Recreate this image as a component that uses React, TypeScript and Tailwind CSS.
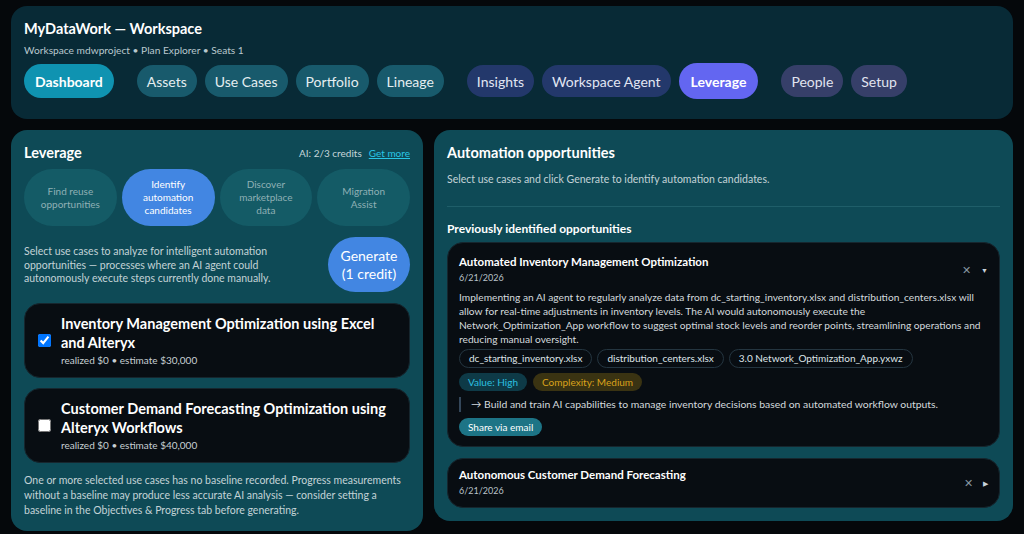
import React, { useState } from 'react';

const navGroups = [
  [{ label: 'Dashboard', tone: 'dash' }],
  [
    { label: 'Assets', tone: 'teal' },
    { label: 'Use Cases', tone: 'teal' },
    { label: 'Portfolio', tone: 'teal' },
    { label: 'Lineage', tone: 'teal' },
  ],
  [
    { label: 'Insights', tone: 'blue' },
    { label: 'Workspace Agent', tone: 'blue' },
    { label: 'Leverage', tone: 'active' },
  ],
  [
    { label: 'People', tone: 'slate' },
    { label: 'Setup', tone: 'slate' },
  ],
];

const toneClass: Record<string, string> = {
  dash: 'bg-[#0f93b1] text-white font-bold h-[34px] px-[11px]',
  teal: 'bg-[#185a6c] text-[#e4eef1] h-[32px] px-[10px]',
  blue: 'bg-[#23386b] text-[#e1e6f3] h-[32px] px-[10px]',
  active: 'bg-[#6366f1] text-white font-bold h-[36px] px-3',
  slate: 'bg-[#363f69] text-[#e1e4f0] h-[32px] px-[10px]',
};

const tabs = [
  'Find reuse opportunities',
  'Identify automation candidates',
  'Discover marketplace data',
  'Migration Assist',
];

const useCases = [
  { title: 'Inventory Management Optimization using Excel and Alteryx', est: '$30,000', checked: true },
  { title: 'Customer Demand Forecasting Optimization using Alteryx Workflows', est: '$40,000', checked: false },
];

const chips = ['dc_starting_inventory.xlsx', 'distribution_centers.xlsx', '3.0 Network_Optimization_App.yxwz'];

export default function App() {
  const [checked, setChecked] = useState(useCases.map((u) => u.checked));

  return (
    <div className="min-h-screen bg-[#05080b] px-[11px] pt-[6px] pb-[11px] font-['Lato',sans-serif] text-white">
      <header className="rounded-2xl bg-[#082a36] px-[13px] pt-[13px] pb-[20px]">
        <h1 className="text-[14.5px] font-bold leading-[20px]">MyDataWork — Workspace</h1>
        <p className="mt-[3px] text-[10.2px] leading-[16px] text-[#b8c8ce]">
          Workspace mdwproject • Plan Explorer • Seats 1
        </p>
        <nav className="mt-[5px] flex h-[36px] items-center gap-[23px]">
          {navGroups.map((group, gi) => (
            <div key={gi} className="flex items-center gap-2">
              {group.map((item) => (
                <button
                  key={item.label}
                  className={`flex items-center rounded-full text-[14px] ${toneClass[item.tone]}`}
                >
                  {item.label}
                </button>
              ))}
            </div>
          ))}
        </nav>
      </header>

      <main className="mt-[11px] grid grid-cols-[412px_1fr] items-start gap-[11px]">
        {/* left: leverage tools */}
        <section className="rounded-2xl bg-[#0e4a56] px-[13px] pt-[14px] pb-[13px]">
          <div className="flex items-center justify-between">
            <h2 className="text-[14.5px] font-bold leading-[18px]">Leverage</h2>
            <div className="flex items-center gap-[7px] text-[10px] text-[#c6d6da]">
              <span>AI: 2/3 credits</span>
              <a href="#" className="text-[#29c6e6] underline">Get more</a>
            </div>
          </div>

          <div className="mt-[7px] grid grid-cols-4 gap-[5px]">
            {tabs.map((t, i) => (
              <button
                key={t}
                className={`flex h-[57px] items-center justify-center rounded-full px-4 text-center text-[10px] leading-[13px] ${
                  i === 1 ? 'bg-[#4286e2] text-white' : 'bg-[#145b66] text-[#8fb0b5]'
                }`}
              >
                {t}
              </button>
            ))}
          </div>

          <div className="mt-[11px] flex items-start justify-between">
            <p className="mt-[8px] w-[250px] text-[10.5px] leading-[13.5px] text-[#c3d3d7]">
              Select use cases to analyze for intelligent automation opportunities — processes where an AI agent could
              autonomously execute steps currently done manually.
            </p>
            <button className="h-[55px] w-[82px] rounded-full bg-[#4286e2] text-[14px] leading-[18px] text-white">
              Generate
              <br />
              (1 credit)
            </button>
          </div>

          <div className="mt-[11px] flex flex-col gap-[10px]">
            {useCases.map((u, i) => (
              <label
                key={u.title}
                className="flex h-[75px] items-center gap-[10px] rounded-2xl border border-[#16262e] bg-[#080d12] pl-[13px] pr-3"
              >
                <input
                  type="checkbox"
                  checked={checked[i]}
                  onChange={() => setChecked((c) => c.map((v, j) => (j === i ? !v : v)))}
                  className="h-[13px] w-[13px] shrink-0"
                />
                <div>
                  <div className="text-[14.5px] font-bold leading-[19px]">{u.title}</div>
                  <div className="mt-[1px] text-[10px] leading-[15px] text-[#c7cfd3]">realized $0 • estimate {u.est}</div>
                </div>
              </label>
            ))}
          </div>

          <p className="mt-[10px] text-[10.5px] leading-[15px] text-[#c3d3d7]">
            One or more selected use cases has no baseline recorded. Progress measurements without a baseline may produce
            less accurate AI analysis — consider setting a baseline in the Objectives &amp; Progress tab before generating.
          </p>
        </section>

        {/* right: automation results */}
        <section className="rounded-2xl bg-[#0e4a56] px-[13px] pt-[14px] pb-[13px]">
          <h2 className="text-[14.5px] font-bold leading-[18px]">Automation opportunities</h2>
          <p className="mt-[10px] text-[10.5px] leading-[14px] text-[#c3d3d7]">
            Select use cases and click Generate to identify automation candidates.
          </p>
          <div className="mt-[20px] h-px bg-[#1f5e69]" />
          <h3 className="mt-[14px] text-[12px] font-bold leading-[16px]">Previously identified opportunities</h3>

          <div className="mt-[5px] flex flex-col gap-[11px]">
            <div className="rounded-2xl border border-[#16262e] bg-[#080d12] px-[11px] pt-[11px] pb-[10px]">
              <div className="flex items-center justify-between">
                <div>
                  <div className="text-[11.5px] font-bold leading-[16px]">Automated Inventory Management Optimization</div>
                  <div className="text-[9px] leading-[16px] text-[#b8c2c8]">6/21/2026</div>
                </div>
                <div className="flex items-center gap-[10px] text-[#8796a0]">
                  <span className="text-[11px]">✕</span>
                  <span className="text-[7px] text-[#c8d2da]">▼</span>
                </div>
              </div>
              <p className="mt-[4px] text-[10.2px] leading-[14px] text-[#d4dade]">
                Implementing an AI agent to regularly analyze data from dc_starting_inventory.xlsx and distribution_centers.xlsx
                will allow for real-time adjustments in inventory levels. The AI would autonomously execute the
                Network_Optimization_App workflow to suggest optimal stock levels and reorder points, streamlining operations
                and reducing manual oversight.
              </p>
              <div className="mt-[3px] flex gap-[5px]">
                {chips.map((c) => (
                  <span
                    key={c}
                    className="flex h-[19px] items-center rounded-full border border-[#243540] px-[9px] text-[10px] text-[#dfe5e9]"
                  >
                    {c}
                  </span>
                ))}
              </div>
              <div className="mt-[5px] flex gap-[6px]">
                <span className="flex h-[18px] items-center rounded-full bg-[#0e3a47] px-[9px] text-[10px] text-[#2cc0e0]">
                  Value: High
                </span>
                <span className="flex h-[18px] items-center rounded-full bg-[#3a3312] px-[9px] text-[10px] text-[#d9a21c]">
                  Complexity: Medium
                </span>
              </div>
              <div className="mt-[6px] border-l-2 border-[#34475a] pl-[10px] text-[10.4px] leading-[15px] text-[#d4dade]">
                → Build and train AI capabilities to manage inventory decisions based on automated workflow outputs.
              </div>
              <button className="mt-[6px] flex h-[18px] items-center rounded-full bg-[#1d7486] px-[9px] text-[10px] text-white">
                Share via email
              </button>
            </div>

            <div className="flex items-center justify-between rounded-2xl border border-[#16262e] bg-[#080d12] px-[11px] py-[8px]">
              <div>
                <div className="text-[11.5px] font-bold leading-[16px]">Autonomous Customer Demand Forecasting</div>
                <div className="text-[9px] leading-[16px] text-[#b8c2c8]">6/21/2026</div>
              </div>
              <div className="flex items-center gap-[10px] text-[#8796a0]">
                <span className="text-[11px]">✕</span>
                <span className="text-[7px] text-[#c8d2da]">▶</span>
              </div>
            </div>
          </div>
        </section>
      </main>
    </div>
  );
}
